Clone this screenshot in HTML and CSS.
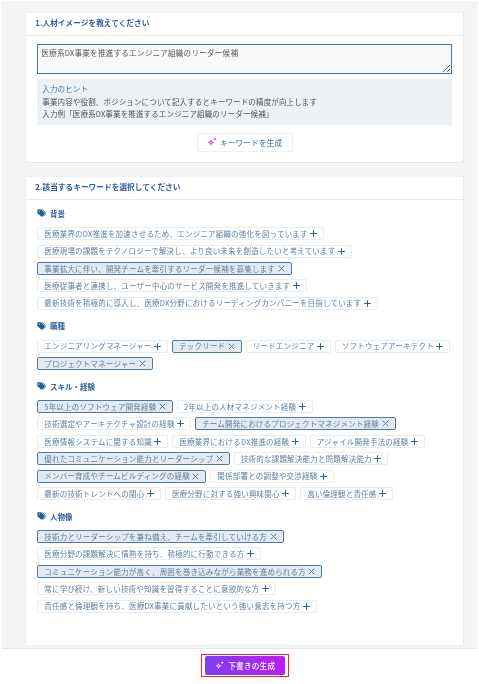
FILE: index.html
```html
<!DOCTYPE html>
<html lang="ja">
<head>
<meta charset="utf-8">
<title>人材イメージ</title>
<link rel="stylesheet" href="styles.css">
</head>
<body>
<svg class="defs" width="0" height="0" aria-hidden="true">
  <defs>
    <symbol id="plus" viewBox="0 0 8 8"><path d="M4 .2v7.600M.2 4h7.600" fill="none" stroke="currentColor" stroke-width="1.150"/></symbol>
    <symbol id="cross" viewBox="0 0 8 8"><path d="M.8.8l6.400 6.400M7.200.8L.8 7.200" fill="none" stroke="currentColor" stroke-width="1.100"/></symbol>
    <symbol id="tag" viewBox="0 0 10 10"><path d="M.3 1.200C.3.700.7.300 1.200.300h2.900c.3 0 .5.100.7.300l3.700 3.700c.3.300.3.900 0 1.200L5.800 8.200c-.3.300-.9.300-1.200 0L.6 4.700C.4 4.500.3 4.300.3 4z" fill="currentColor"/><path d="M6 .4l3.400 3.500c.5.500.5 1.200 0 1.700L6.700 8.300" fill="none" stroke="currentColor" stroke-width=".9"/><circle cx="2.300" cy="2.300" r=".7" fill="#fff"/></symbol>
    <symbol id="sparkle" viewBox="0 0 10 10"><path d="M4 2.200l1 2.300 2.300 1-2.300 1-1 2.300-1-2.300-2.300-1 2.300-1zM4 4.200l-.4.900-.9.400.9.400.4.900.4-.9.9-.4-.9-.4zM8 .4l.5 1.100 1.100.5-1.100.5L8 3.600l-.5-1.100L6.400 2l1.100-.5z" fill-rule="evenodd" fill="currentColor"/></symbol>
  </defs>
</svg>
<main class="page">
  <div class="scroll">
    <section class="panel">
      <h2 class="panel-title">1.人材イメージを教えてください</h2>
      <div class="panel-body first">
        <textarea class="input">医療系DX事業を推進するエンジニア組織のリーダー候補</textarea>
        <div class="hint">
          <p class="hint-title">入力のヒント</p>
          <p>事業内容や役割、ポジションについて記入するとキーワードの精度が向上します</p>
          <p>入力例「医療系DX事業を推進するエンジニア組織のリーダー候補」</p>
        </div>
        <div class="center">
          <button class="kw-btn"><svg class="kw-icon"><use href="#sparkle"/></svg>キーワードを生成</button>
        </div>
      </div>
    </section>

    <section class="panel">
      <h2 class="panel-title">2.該当するキーワードを選択してください</h2>
      <div class="panel-body second">
        <h3 class="cat"><svg class="tag"><use href="#tag"/></svg>背景</h3>
        <div class="chips">
          <span class="chip">医療業界のDX推進を加速させるため、エンジニア組織の強化を図っています<svg class="ic"><use href="#plus"/></svg></span>
          <span class="chip">医療現場の課題をテクノロジーで解決し、より良い未来を創造したいと考えています<svg class="ic"><use href="#plus"/></svg></span>
          <span class="chip on">事業拡大に伴い、開発チームを牽引するリーダー候補を募集します<svg class="ic"><use href="#cross"/></svg></span>
          <span class="chip">医療従事者と連携し、ユーザー中心のサービス開発を推進していきます<svg class="ic"><use href="#plus"/></svg></span>
          <span class="chip">最新技術を積極的に導入し、医療DX分野におけるリーディングカンパニーを目指しています<svg class="ic"><use href="#plus"/></svg></span>
        </div>
        <h3 class="cat"><svg class="tag"><use href="#tag"/></svg>職種</h3>
        <div class="chips">
          <span class="chip">エンジニアリングマネージャー<svg class="ic"><use href="#plus"/></svg></span>
          <span class="chip on">テックリード<svg class="ic"><use href="#cross"/></svg></span>
          <span class="chip">リードエンジニア<svg class="ic"><use href="#plus"/></svg></span>
          <span class="chip">ソフトウェアアーキテクト<svg class="ic"><use href="#plus"/></svg></span>
          <span class="chip on">プロジェクトマネージャー<svg class="ic"><use href="#cross"/></svg></span>
        </div>
        <h3 class="cat"><svg class="tag"><use href="#tag"/></svg>スキル・経験</h3>
        <div class="chips">
          <span class="chip on">5年以上のソフトウェア開発経験<svg class="ic"><use href="#cross"/></svg></span>
          <span class="chip">2年以上の人材マネジメント経験<svg class="ic"><use href="#plus"/></svg></span>
          <span class="chip">技術選定やアーキテクチャ設計の経験<svg class="ic"><use href="#plus"/></svg></span>
          <span class="chip on">チーム開発におけるプロジェクトマネジメント経験<svg class="ic"><use href="#cross"/></svg></span>
          <span class="chip">医療情報システムに関する知識<svg class="ic"><use href="#plus"/></svg></span>
          <span class="chip">医療業界におけるDX推進の経験<svg class="ic"><use href="#plus"/></svg></span>
          <span class="chip">アジャイル開発手法の経験<svg class="ic"><use href="#plus"/></svg></span>
          <span class="chip on">優れたコミュニケーション能力とリーダーシップ<svg class="ic"><use href="#cross"/></svg></span>
          <span class="chip">技術的な課題解決能力と問題解決能力<svg class="ic"><use href="#plus"/></svg></span>
          <span class="chip on">メンバー育成やチームビルディングの経験<svg class="ic"><use href="#cross"/></svg></span>
          <span class="chip">関係部署との調整や交渉経験<svg class="ic"><use href="#plus"/></svg></span>
          <span class="chip">最新の技術トレンドへの関心<svg class="ic"><use href="#plus"/></svg></span>
          <span class="chip">医療分野に対する強い興味関心<svg class="ic"><use href="#plus"/></svg></span>
          <span class="chip">高い倫理観と責任感<svg class="ic"><use href="#plus"/></svg></span>
        </div>
        <h3 class="cat"><svg class="tag"><use href="#tag"/></svg>人物像</h3>
        <div class="chips">
          <span class="chip on">技術力とリーダーシップを兼ね備え、チームを牽引していける方<svg class="ic"><use href="#cross"/></svg></span>
          <span class="chip">医療分野の課題解決に情熱を持ち、積極的に行動できる方<svg class="ic"><use href="#plus"/></svg></span>
          <span class="chip on">コミュニケーション能力が高く、周囲を巻き込みながら業務を進められる方<svg class="ic"><use href="#cross"/></svg></span>
          <span class="chip">常に学び続け、新しい技術や知識を習得することに意欲的な方<svg class="ic"><use href="#plus"/></svg></span>
          <span class="chip">責任感と倫理観を持ち、医療DX事業に貢献したいという強い意志を持つ方<svg class="ic"><use href="#plus"/></svg></span>
        </div>
      </div>
    </section>
  </div>
  <footer class="footer">
    <div class="highlight">
      <button class="gen-btn"><svg class="gen-icon"><use href="#sparkle"/></svg>下書きの生成</button>
    </div>
  </footer>
</main>
</body>
</html>
```
FILE: styles.css
```css
* { box-sizing: border-box; }
html, body { margin: 0; padding: 0; background: #fff; }
body {
  width: 479px;
  height: 684px;
  overflow: hidden;
  font-family: "Noto Sans CJK JP", "Noto Sans", sans-serif;
  color: #4a4f55;
}
.defs { position: absolute; }
.page {
  margin: 1px 2px 0 2px;
  height: 678px;
  display: flex;
  flex-direction: column;
  background: #f4f4f4;
  filter: blur(0.35px);
}
.scroll {
  flex: 1;
  padding: 10.7px 13px 0 23.300px;
  display: flex;
  flex-direction: column;
  gap: 12.400px;
  min-height: 0;
}
.panel {
  background: #fff;
  border: 1px solid #e9ebed;
  border-bottom: 1px solid #f1f2f3;
  border-top-color: #eef0f2;
}
.panel:first-child { border-bottom: 1px solid #e4e6e8; }
.panel-title {
  margin: 0;
  height: 23px;
  padding: 0 9px;
  line-height: 20px;
  font-size: 7.6px;
  font-weight: 700;
  letter-spacing: 0.1px;
  color: #2a6199;
  border-bottom: 1px solid #e9ebed;
}
.panel-body { padding: 8.300px 11px; }
.panel-body.first { padding-bottom: 10.300px; }
.panel-body.second { height: 437px; padding-top: 0; }
.input {
  display: block;
  width: 100%;
  height: 30.500px;
  resize: vertical;
  background: #f8f8f9;
  border: 1px solid #4079ad;
  border-radius: 0;
  outline: 0;
  padding: 2px 3px;
  font: 7.6px/12px "Noto Sans CJK JP", sans-serif;
  letter-spacing: 0.2px;
  color: #55595e;
}
.hint {
  margin-top: 4.500px;
  padding: 4.500px 5px;
  background: #edf1f5;
  font-size: 7.5px;
  line-height: 12.300px;
  letter-spacing: 0.14px;
  color: #50555a;
}
.hint p { margin: 0; }
.hint .hint-title { color: #3f7ab3; }
.center { display: flex; justify-content: center; margin-top: 8px; }
.kw-btn {
  height: 19px;
  width: 96px;
  padding: 0;
  display: flex;
  align-items: center;
  justify-content: center;
  gap: 3px;
  background: #fff;
  border: 1px solid #eaeff5;
  border-radius: 2px;
  font: 500 7.6px "Noto Sans CJK JP", sans-serif;
  letter-spacing: 0.2px;
  color: #5f83a6;
}
.kw-icon { width: 10px; height: 10px; color: #9a35e0; }
.cat {
  margin: 10.700px 0 7.300px;
  height: 12px;
  display: flex;
  align-items: center;
  gap: 3.700px;
  font-size: 7.5px;
  line-height: 12px;
  font-weight: 700;
  color: #2a6199;
}
.cat:first-child { margin-top: 8.300px; }
.tag { width: 9px; height: 9px; color: #1f5f99; }
.chips { display: flex; flex-wrap: wrap; gap: 4.400px 4px; }
.chip {
  height: 13px;
  padding: 0 6px;
  display: inline-flex;
  align-items: center;
  gap: 2.500px;
  border: 1px solid #e7edf3;
  border-radius: 2px;
  background: #fff;
  font-size: 7.5px;
  line-height: 1;
  letter-spacing: 0.2px;
  color: #5f7f9e;
  white-space: nowrap;
}
.chip.on {
  background: #e4eaf1;
  border-color: #4a7aa6;
}
.ic { width: 7px; height: 7px; color: #2a6199; flex: none; }
.on .ic { color: #4a7ba8; }
.footer {
  flex: none;
  height: 30.700px;
  padding: 4.300px 0 2px 11.500px;
  background: #fff;
  border-top: 1px solid #e6e6e6;
  display: flex;
  justify-content: center;
  align-items: flex-start;
}
.highlight { border: 1px solid #f22; padding: 1px 3px; background: #fff; }
.gen-btn {
  width: 80px;
  height: 19.500px;
  padding: 0;
  display: flex;
  align-items: center;
  justify-content: center;
  gap: 4px;
  border: 0;
  border-radius: 2px;
  background: linear-gradient(90deg, #7c3ff2, #bd1cf0);
  color: #fff;
  font: 500 7.6px "Noto Sans CJK JP", sans-serif;
  letter-spacing: 0.25px;
}
.gen-icon { width: 9px; height: 9px; color: #fff; }
```
